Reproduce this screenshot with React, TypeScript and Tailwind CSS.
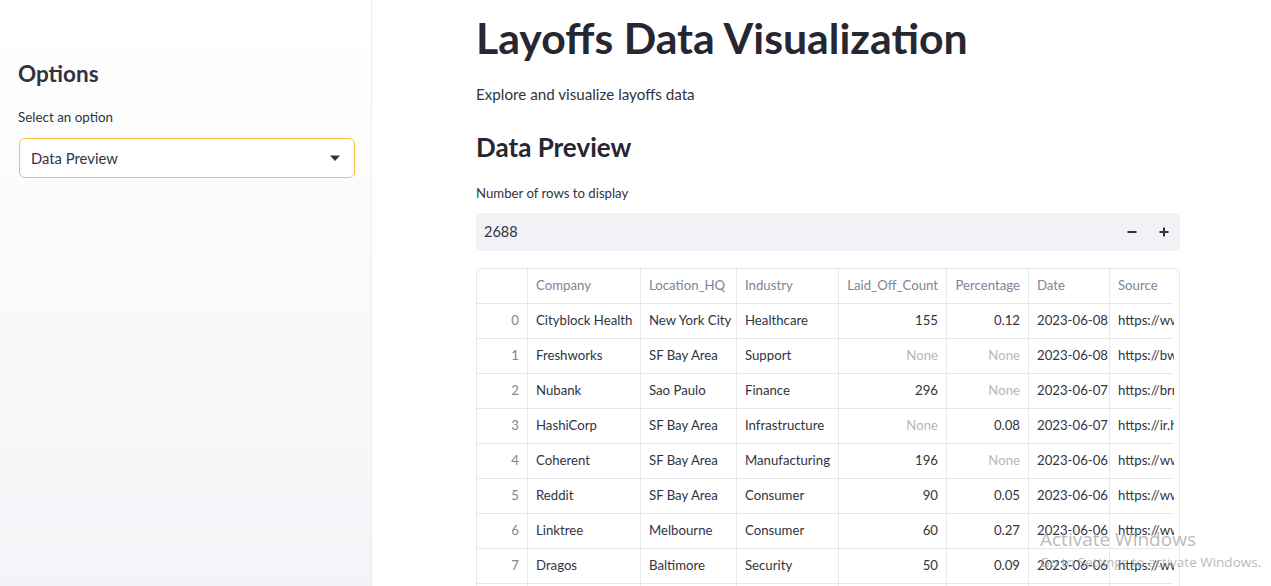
import React from "react";

const cols = [
  { key: "idx", label: "", w: 51, align: "right" },
  { key: "company", label: "Company", w: 113, align: "left" },
  { key: "loc", label: "Location_HQ", w: 96, align: "left" },
  { key: "ind", label: "Industry", w: 102, align: "left" },
  { key: "count", label: "Laid_Off_Count", w: 108, align: "right" },
  { key: "pct", label: "Percentage", w: 82, align: "right" },
  { key: "date", label: "Date", w: 81, align: "left" },
  { key: "src", label: "Source", w: 64, align: "left" },
];

const rows: string[][] = [
  ["0", "Cityblock Health", "New York City", "Healthcare", "155", "0.12", "2023-06-08", "https://www.x"],
  ["1", "Freshworks", "SF Bay Area", "Support", "None", "None", "2023-06-08", "https://bwww"],
  ["2", "Nubank", "Sao Paulo", "Finance", "296", "None", "2023-06-07", "https://brrrr"],
  ["3", "HashiCorp", "SF Bay Area", "Infrastructure", "None", "0.08", "2023-06-07", "https://ir.ha"],
  ["4", "Coherent", "SF Bay Area", "Manufacturing", "196", "None", "2023-06-06", "https://www.x"],
  ["5", "Reddit", "SF Bay Area", "Consumer", "90", "0.05", "2023-06-06", "https://www.x"],
  ["6", "Linktree", "Melbourne", "Consumer", "60", "0.27", "2023-06-06", "https://www.x"],
  ["7", "Dragos", "Baltimore", "Security", "50", "0.09", "2023-06-06", "https://www.x"],
  ["8", "Zoom", "SF Bay Area", "Other", "40", "0.01", "2023-06-05", "https://www.x"],
];

export default function App() {
  return (
    <div
      className="relative flex h-[586px] w-[1271px] overflow-hidden bg-white text-[#31333f]"
      style={{ fontFamily: "Lato, 'Noto Sans', sans-serif" }}
    >
      {/* Sidebar */}
      <aside className="flex h-full w-[372px] shrink-0 flex-col border-r border-[#eceef2] bg-gradient-to-b from-white to-[#f3f4f7] px-[18px] pt-[58px]">
        <h2 className="text-[22.5px] font-bold leading-[32px] text-[#31333f]">Options</h2>
        <div className="mt-[17px] text-[13.4px] leading-[20px]">Select an option</div>
        <div className="ml-px mt-[11px] flex h-[40px] w-[336px] items-center justify-between rounded-[6px] border border-[#ffbd45] bg-white pl-[11px] pr-[13px]">
          <span className="text-[14.8px]">Data Preview</span>
          <svg width="12" height="7" viewBox="0 0 12 7">
            <path d="M1 0.5 L11 0.5 L6 6 Z" fill="#31333f" />
          </svg>
        </div>
      </aside>

      {/* Main */}
      <main className="flex flex-col pl-[104px] pt-[10px]">
        <div className="w-[704px]">
          <h1 className="text-[42.8px] font-bold leading-[56px] text-[#262730]">
            Layoffs Data Visualization
          </h1>
          <p className="mt-[16px] text-[15.2px] leading-[24px]">Explore and visualize layoffs data</p>
          <h2 className="mt-[23px] text-[26px] font-bold leading-[36px] text-[#262730]">Data Preview</h2>
          <div className="mt-[18px] text-[13.2px] leading-[20px]">Number of rows to display</div>
          <div className="mt-[10px] flex h-[38px] items-center justify-between rounded-[6px] bg-[#f0f2f6] pl-[8px] pr-[10px]">
            <span className="text-[14.5px]">2688</span>
            <div className="flex items-center gap-[20px]">
              <svg width="12" height="12" viewBox="0 0 12 12">
                <path d="M1.5 6 H10.5" stroke="#31333f" strokeWidth="2" />
              </svg>
              <svg width="12" height="12" viewBox="0 0 12 12">
                <path d="M1.5 6 H10.5 M6 1.5 V10.5" stroke="#31333f" strokeWidth="2" />
              </svg>
            </div>
          </div>

          {/* Table */}
          <div className="mt-[17px] overflow-hidden rounded-t-[6px] border border-b-0 border-[#e6e7ea] pr-[6px]">
            <div className="flex h-[35px] border-b border-[#e6e7ea]">
              {cols.map((c, i) => (
                <div
                  key={c.key}
                  style={{ width: c.w }}
                  className={`flex shrink-0 items-center overflow-hidden whitespace-nowrap px-[8px] text-[13.2px] text-[#808495] ${
                    i < cols.length - 1 ? "border-r border-[#e6e7ea]" : ""
                  } ${c.align === "right" ? "justify-end" : ""}`}
                >
                  {c.label}
                </div>
              ))}
            </div>
            {rows.map((r) => (
              <div key={r[0]} className="flex h-[35px] border-b border-[#e6e7ea]">
                {r.map((v, i) => {
                  const c = cols[i];
                  const isNone = v === "None";
                  const color = i === 0 ? "text-[#808495]" : isNone ? "text-[#b6b8c0]" : "text-[#31333f]";
                  return (
                    <div
                      key={i}
                      style={{ width: c.w }}
                      className={`flex shrink-0 items-center overflow-hidden whitespace-nowrap text-[13.2px] ${color} ${
                        i === cols.length - 1 ? "pl-[8px]" : "px-[8px] border-r border-[#e6e7ea]"
                      } ${c.align === "right" ? "justify-end" : ""}`}
                    >
                      {v}
                    </div>
                  );
                })}
              </div>
            ))}
          </div>
        </div>
      </main>

      {/* Windows activation watermark */}
      <div
        className="pointer-events-none absolute left-[1040px] top-[526px] whitespace-nowrap text-[#a8a8a8]/80"
        style={{ fontFamily: "'Open Sans', 'Noto Sans', sans-serif" }}
      >
        <div className="text-[19px] leading-[26px]">Activate Windows</div>
        <div className="text-[13.5px] leading-[20px]">Go to Settings to activate Windows.</div>
      </div>
    </div>
  );
}
